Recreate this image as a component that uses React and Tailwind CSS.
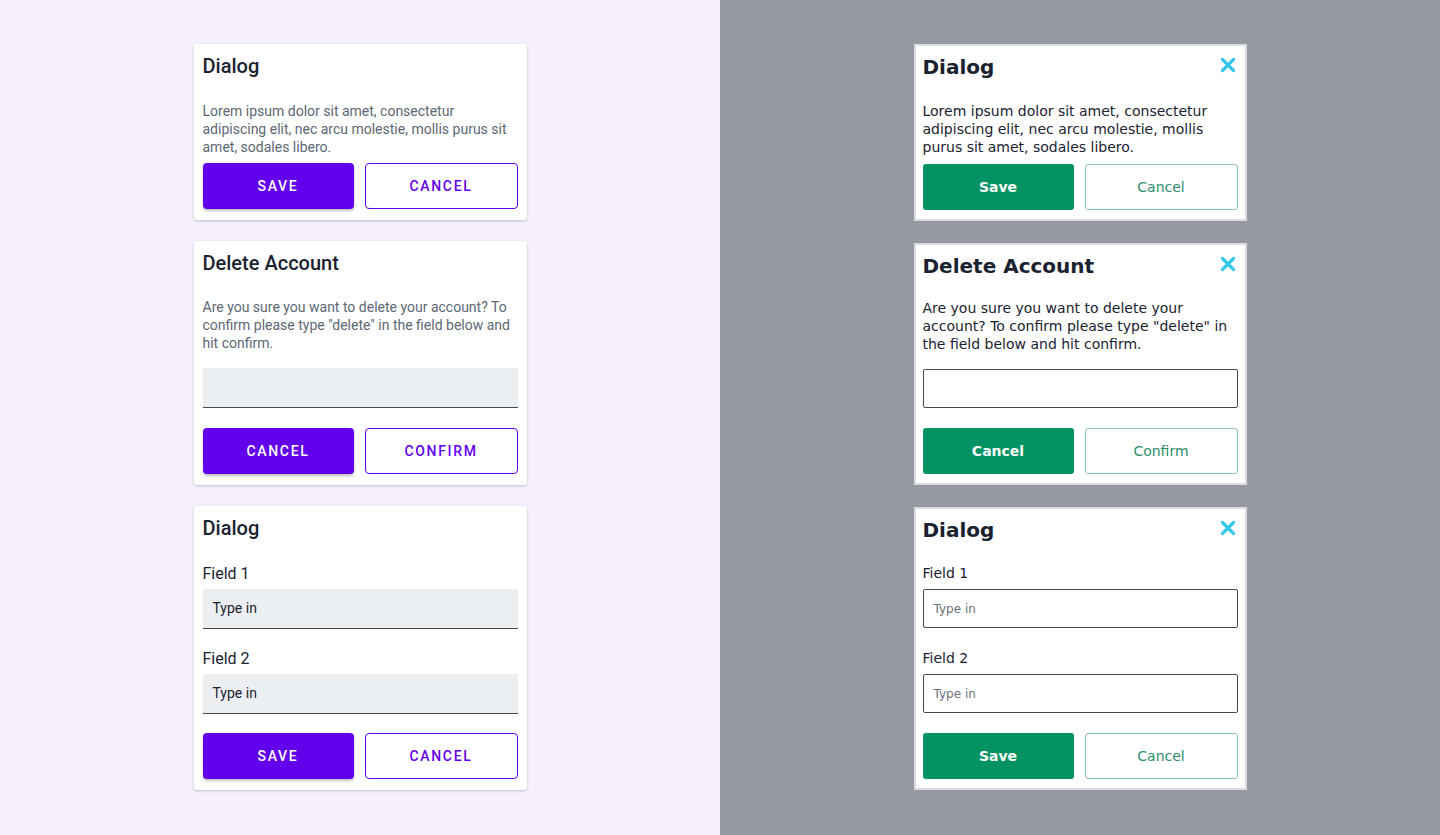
const roboto = { fontFamily: "Roboto, 'Liberation Sans', sans-serif" };

const LeftCard = ({ title, children, primary, secondary }) => (
  <div className="w-[333px] rounded-[3px] bg-white px-[9px] pt-[10px] pb-[11px] shadow-[0_1px_3px_rgba(0,0,0,0.22)]">
    <h2 className="text-[20px] font-medium leading-[24px] text-[#1a2230]">{title}</h2>
    {children}
    <div className="flex gap-[11px]">
      <button className="h-[46px] flex-1 rounded-[4px] bg-[#6200ee] text-[14px] font-medium uppercase tracking-[0.12em] text-white shadow-[0_2px_3px_rgba(0,0,0,0.25)]">
        {primary}
      </button>
      <button className="h-[46px] flex-1 rounded-[4px] border border-[#6200ee] bg-white text-[14px] font-medium uppercase tracking-[0.12em] text-[#6200ee]">
        {secondary}
      </button>
    </div>
  </div>
);

const LeftInput = ({ placeholder }) => (
  <div className="flex h-[40px] items-center border-b border-[#444a52] bg-[#eceff2] px-[10px] text-[14px] text-[#1a2230]">
    {placeholder}
  </div>
);

const CloseIcon = () => (
  <svg width="16" height="16" viewBox="0 0 16 16" className="shrink-0">
    <path d="M2.5 2.5L13.5 13.5M13.5 2.5L2.5 13.5" stroke="#36c6e6" strokeWidth="3.2" strokeLinecap="round" />
  </svg>
);

const RightCard = ({ title, children, primary, secondary }) => (
  <div className="w-[333px] border-2 border-[#dcdde1] bg-white px-[7px] pt-[8px] pb-[9px]">
    <div className="flex items-start justify-between">
      <h2 className="text-[20px] font-bold leading-[26px] text-[#1a2230]">{title}</h2>
      <div className="mt-[3px] mr-[2px]">
        <CloseIcon />
      </div>
    </div>
    {children}
    <div className="flex gap-[11px]">
      <button className="h-[46px] flex-1 rounded-[3px] bg-[#009262] text-[14px] font-semibold text-white">
        {primary}
      </button>
      <button className="h-[46px] flex-1 rounded-[3px] border border-[#8cc6b2] bg-white text-[14px] text-[#2f8d6e]">
        {secondary}
      </button>
    </div>
  </div>
);

const RightInput = ({ placeholder }) => (
  <div className="flex h-[39px] items-center rounded-[2px] border border-[#444a52] bg-white px-[10px] text-[12px] text-[#6b717a]">
    {placeholder}
  </div>
);

export default function App() {
  return (
    <div className="flex h-[835px] w-[1440px]">
      <div className="flex w-[720px] flex-col items-center gap-[21px] bg-[#f6f0ff] pt-[44px]" style={roboto}>
        <LeftCard title="Dialog" primary="Save" secondary="Cancel">
          <p className="mt-[24px] mb-[7px] text-[14px] leading-[18px] text-[#5c6874]">
            Lorem ipsum dolor sit amet, consectetur adipiscing elit, nec arcu molestie, mollis purus sit amet, sodales libero.
          </p>
        </LeftCard>
        <LeftCard title="Delete Account" primary="Cancel" secondary="Confirm">
          <p className="mt-[23px] mb-[16px] text-[14px] leading-[18px] text-[#5c6874]">
            Are you sure you want to delete your account? To confirm please type "delete" in the field below and hit confirm.
          </p>
          <div className="mb-[20px]">
            <LeftInput placeholder="" />
          </div>
        </LeftCard>
        <LeftCard title="Dialog" primary="Save" secondary="Cancel">
          <div className="mt-[24px] mb-[19px] flex flex-col">
            <label className="text-[16px] leading-[20px] text-[#1a2230]">Field 1</label>
            <div className="mt-[5px]">
              <LeftInput placeholder="Type in" />
            </div>
            <label className="mt-[20px] text-[16px] leading-[20px] text-[#1a2230]">Field 2</label>
            <div className="mt-[5px]">
              <LeftInput placeholder="Type in" />
            </div>
          </div>
        </LeftCard>
      </div>
      <div
        className="flex w-[720px] flex-col items-center gap-[22px] bg-[#9599a2] pt-[44px]"
        style={{ fontFamily: "'DejaVu Sans', 'Open Sans', sans-serif" }}
      >
        <RightCard title="Dialog" primary="Save" secondary="Cancel">
          <p className="mt-[22px] mb-[8px] text-[14px] leading-[18px] text-[#1a2230]">
            Lorem ipsum dolor sit amet, consectetur adipiscing elit, nec arcu molestie, mollis purus sit amet, sodales libero.
          </p>
        </RightCard>
        <RightCard title="Delete Account" primary="Cancel" secondary="Confirm">
          <p className="mt-[20px] mb-[16px] text-[14px] leading-[18px] text-[#1a2230]">
            Are you sure you want to delete your account? To confirm please type "delete" in the field below and hit confirm.
          </p>
          <div className="mb-[20px]">
            <RightInput placeholder="" />
          </div>
        </RightCard>
        <RightCard title="Dialog" primary="Save" secondary="Cancel">
          <div className="mt-[20px] mb-[20px] flex flex-col">
            <label className="text-[14px] leading-[20px] text-[#1a2230]">Field 1</label>
            <div className="mt-[6px]">
              <RightInput placeholder="Type in" />
            </div>
            <label className="mt-[20px] text-[14px] leading-[20px] text-[#1a2230]">Field 2</label>
            <div className="mt-[6px]">
              <RightInput placeholder="Type in" />
            </div>
          </div>
        </RightCard>
      </div>
    </div>
  );
}
